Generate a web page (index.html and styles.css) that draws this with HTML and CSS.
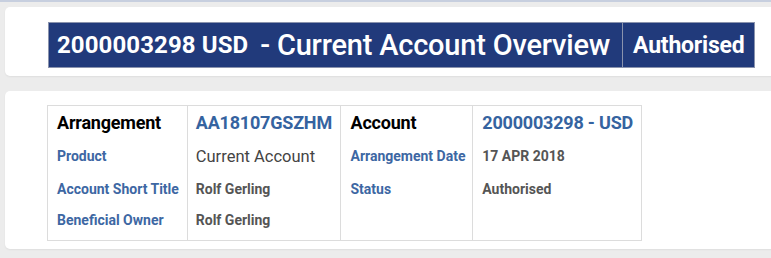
FILE: index.html
```html
<!DOCTYPE html>
<html>
<head>
<meta charset="utf-8">
<link rel="stylesheet" href="styles.css">
</head>
<body>
<div class="topstrip"></div>
<div class="page">
  <div class="card card-head">
    <div class="bar">
      <div class="bar-cell bar-title">
        <span class="acct">2000003298 USD</span>
        <span class="title">- Current Account Overview</span>
      </div>
      <div class="bar-cell bar-status">Authorised</div>
    </div>
  </div>
  <div class="card card-body">
    <div class="table">
      <div class="col c1">
        <div class="item r1 head">Arrangement</div>
        <div class="item r2 label">Product</div>
        <div class="item r3 label">Account Short Title</div>
        <div class="item r4 label">Beneficial Owner</div>
      </div>
      <div class="col c2">
        <div class="item r1 link">AA18107GSZHM</div>
        <div class="item r2 plain">Current Account</div>
        <div class="item r3 value">Rolf Gerling</div>
        <div class="item r4 value">Rolf Gerling</div>
      </div>
      <div class="col c3">
        <div class="item r1 head">Account</div>
        <div class="item r2 label">Arrangement Date</div>
        <div class="item r3 label">Status</div>
      </div>
      <div class="col c4">
        <div class="item r1 link">2000003298 - USD</div>
        <div class="item r2 value">17 APR 2018</div>
        <div class="item r3 value">Authorised</div>
      </div>
    </div>
  </div>
</div>
</body>
</html>
```

FILE: styles.css
```css
html, body {
  margin: 0;
  padding: 0;
}
body {
  background: #ececec;
  font-family: Roboto, "Liberation Sans", sans-serif;
  overflow: hidden;
  width: 771px;
  height: 258px;
}
.topstrip {
  height: 2px;
  background: #c7cfdf;
}
.page {
  padding: 5px 0 0 5px;
  display: flex;
  flex-direction: column;
  gap: 15px;
}
.card {
  background: #fff;
  border-radius: 5px;
  margin-right: -12px;
  box-shadow: 0 1px 2px rgba(0, 0, 0, 0.06);
}
.card-head {
  height: 69px;
  box-sizing: border-box;
  padding: 15px 0 0 43px;
}
.bar {
  display: flex;
  width: 707px;
  height: 46px;
  background: #213a7b;
}
.bar-cell {
  box-sizing: border-box;
  height: 46px;
  border: 1px solid #8a93ad;
  display: flex;
  align-items: center;
  color: #fff;
}
.bar-title {
  width: 575px;
  padding-left: 8px;
  gap: 12px;
}
.bar-status {
  width: 133px;
  margin-left: -1px;
  padding-left: 10px;
  font-weight: 700;
  font-size: 23px;
  letter-spacing: -0.2px;
}
.acct {
  font-weight: 700;
  font-size: 24px;
  letter-spacing: 0.1px;
}
.title {
  font-size: 29px;
  font-weight: 500;
  letter-spacing: -0.2px;
}
.card-body {
  height: 158px;
  box-sizing: border-box;
  padding: 14px 0 0 42px;
}
.table {
  display: flex;
  width: 595px;
  border: 1px solid #dcdcdc;
  box-sizing: border-box;
  height: 136px;
}
.col {
  display: flex;
  flex-direction: column;
  box-sizing: border-box;
  padding-left: 9px;
  border-right: 1px solid #dcdcdc;
}
.c1 { width: 140px; }
.c2 { width: 153px; padding-left: 8px; }
.c3 { width: 133px; padding-left: 10px; }
.c4 { width: 168px; border-right: none; }
.item {
  display: flex;
  align-items: center;
  white-space: nowrap;
}
.r1 { height: 33px; }
.r2 { height: 34px; }
.r3 { height: 31px; }
.r4 { height: 32px; }
.head {
  font-weight: 700;
  font-size: 18px;
  color: #000;
  letter-spacing: -0.2px;
}
.link {
  font-weight: 700;
  font-size: 18px;
  color: #3563a0;
  letter-spacing: -0.2px;
}
.label {
  font-weight: 700;
  font-size: 14px;
  color: #3d67a3;
}
.plain {
  font-weight: 400;
  font-size: 16.5px;
  color: #444;
}
.value {
  font-weight: 700;
  font-size: 14px;
  color: #555;
}
```
